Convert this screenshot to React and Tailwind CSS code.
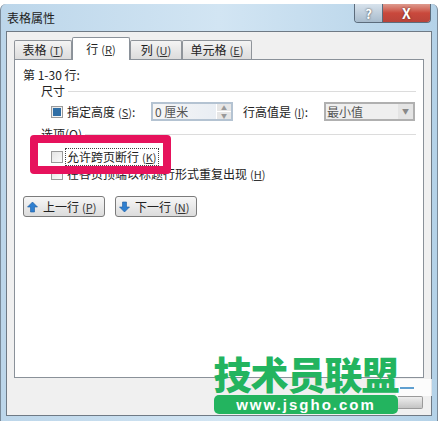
const font = { fontFamily: '"Noto Sans CJK SC", "Liberation Sans", sans-serif' };

function Key({ k }) {
  return (
    <span className="ml-[3px] text-[11px] text-[#333]">
      (<span className="underline">{k}</span>)
    </span>
  );
}

function Tab({ label, k, active, width }) {
  if (active) {
    return (
      <div className={`relative z-10 -mb-px -mt-[2px] flex h-[23px] ${width} items-center justify-center rounded-t-[2px] border border-b-0 border-[#8a9199] bg-white text-[12px] text-[#222]`}>
        {label}
        <Key k={k} />
      </div>
    );
  }
  return (
    <div className={`flex h-[19px] ${width} items-center justify-center rounded-t-[2px] border border-b-0 border-[#8f949a] bg-gradient-to-b from-[#f4f4f4] to-[#dcdcdc] text-[12px] text-[#222]`}>
      {label}
      <Key k={k} />
    </div>
  );
}

function Check({ on }) {
  return (
    <span className="flex h-[12px] w-[12px] shrink-0 items-center justify-center border border-[#9a9a9a] bg-gradient-to-br from-[#e4e4e4] to-[#fbfbfb]">
      {on && <span className="h-[8px] w-[8px] bg-[#2f6ea5]" />}
    </span>
  );
}

function Arrow({ up }) {
  return (
    <svg width="11" height="12" viewBox="0 0 11 12">
      <path
        d={up ? "M5.5 1 L10.5 6 H7.5 V11 H3.5 V6 H0.5 Z" : "M5.5 11 L10.5 6 H7.5 V1 H3.5 V6 H0.5 Z"}
        fill="#2f7fd0"
        stroke="#1d5da0"
        strokeWidth="0.6"
      />
    </svg>
  );
}

function NavButton({ up, label, k }) {
  return (
    <div className="flex h-[21px] w-[82px] items-center gap-[5px] rounded-[3px] border border-[#7b7b7b] bg-gradient-to-b from-[#f7f7f7] to-[#dcdcdc] pl-[3px] text-[12px] text-[#222]">
      <Arrow up={up} />
      <span>
        {label}
        <Key k={k} />
      </span>
    </div>
  );
}

function GroupTitle({ children }) {
  return (
    <div className="flex items-center gap-[3px] pl-[26px] text-[12px] leading-[16px] text-[#222]">
      {children}
      <span className="h-px flex-1 bg-[#dcdcdc]" />
    </div>
  );
}

export default function App() {
  return (
    <div className="relative h-[421px] w-[441px] overflow-hidden bg-white" style={font}>
      <div className="mt-[4px] flex h-[417px] w-[438px] flex-col rounded-t-[6px] border-l border-r border-[#7a8a99] bg-gradient-to-r from-[#bcd6ea] via-[#d2e5f3] to-[#b4d2e8] px-[5px] pb-[5px]">
        {/* title bar */}
        <div className="flex h-[27px] shrink-0 items-start justify-between">
          <span className="pl-[1px] pt-[5px] text-[12px] leading-[18px] text-[#222]">表格属性</span>
          <div className="mr-[1px] flex h-[19px] overflow-hidden rounded-b-[4px] border border-t-0 border-[#5c6c7c]">
            <div className="flex w-[28px] items-center justify-center border-r border-[#5c6c7c] bg-gradient-to-b from-[#d7e2ec] to-[#a9bccd] text-[13px] leading-none font-bold text-white [text-shadow:0_0_2px_#333]">
              ?
            </div>
            <div className="flex w-[47px] items-center justify-center bg-gradient-to-b from-[#dd9a8e] via-[#c9483c] to-[#b9443a] text-[14px] leading-none font-bold text-white [text-shadow:0_0_2px_#522]">
              X
            </div>
          </div>
        </div>

        {/* dialog body */}
        <div className="flex min-h-0 flex-1 flex-col border border-[#6f7a85] bg-[#f0f0f0] px-[7px]">
          <div className="flex h-[27px] shrink-0 items-end">
            <Tab label="表格" k="T" width="w-[58px]" />
            <Tab label="行" k="R" active width="w-[58px]" />
            <Tab label="列" k="U" width="w-[52px]" />
            <Tab label="单元格" k="E" width="w-[70px]" />
          </div>

          <div className="h-[319px] shrink-0 border border-[#8a9199] bg-white pt-[7px]">
            <div className="pl-[8px] text-[12px] leading-[16px] text-[#222]">第 1-30 行:</div>
            <div className="pr-[7px]">
              <GroupTitle>尺寸</GroupTitle>
            </div>

            <div className="mt-[3px] flex h-[19px] items-center pl-[36px] text-[12px] text-[#222]">
              <Check on />
              <span className="ml-[4px] w-[84px]">
                指定高度
                <Key k="S" />:
              </span>
              <div className="flex h-[19px] w-[82px] items-center justify-between border-2 border-[#b4c3d2] bg-gradient-to-r from-[#f6f6f6] to-[#e6ecf3] pl-[2px] text-[#555]">
                0 厘米
                <span className="flex h-full w-[15px] flex-col gap-px bg-white pl-[1px]">
                  <span className="flex flex-1 items-center justify-center bg-[#e6e6e6] text-[6px] leading-none text-[#999]">▲</span>
                  <span className="flex flex-1 items-center justify-center bg-[#e6e6e6] text-[6px] leading-none text-[#999]">▼</span>
                </span>
              </div>
              <span className="ml-[10px] w-[81px]">
                行高值是
                <Key k="I" />:
              </span>
              <div className="flex h-[19px] w-[91px] items-center justify-between border-2 border-[#b0b0b0] bg-[#efefef] pl-[1px] text-[#555]">
                最小值
                <span className="flex h-full w-[15px] items-center justify-center bg-[#e4e4e4] text-[7px] text-[#888]">▼</span>
              </div>
            </div>

            <div className="mt-[5px] pr-[7px]">
              <GroupTitle>选项(O)</GroupTitle>
            </div>

            <div className="mt-[5px] flex h-[20px] items-center pl-[36px] text-[12px] text-[#222]">
              <Check />
              <span className="ml-[2px] border border-dotted border-[#444] px-[1px] leading-[16px]">
                允许跨页断行
                <Key k="K" />
              </span>
            </div>
            <div className="flex h-[14px] items-center pl-[36px] text-[12px] text-[#222]">
              <Check />
              <span className="ml-[4px]">
                在各页顶端以标题行形式重复出现
                <Key k="H" />
              </span>
            </div>

            <div className="mt-[15px] flex gap-[10px] pl-[8px]">
              <NavButton up label="上一行" k="P" />
              <NavButton label="下一行" k="N" />
            </div>
          </div>
        </div>
      </div>

      {/* red callout over the first option */}
      <div className="absolute left-[30px] top-[135px] h-[39px] w-[141px] rounded-[4px] border-[8px] border-[#e6125c]" />

      {/* washed out button and haze behind the watermark */}
      <div className="absolute left-[396px] top-[379px] h-[17px] w-[36px] bg-white/80" />
      <div className="absolute left-[398px] top-[396px] h-[13px] w-[25px] rounded-r-[2px] border border-l-0 border-[#9a9a9a] bg-gradient-to-b from-[#eeeeee] to-[#c4c4c4]" />
      <div className="absolute left-[400px] top-[387px] h-[2px] w-[14px] bg-[#5f9fd0]" />

      {/* site watermark */}
      <div className="absolute left-[214px] top-[352px] flex w-[184px] flex-col items-center">
        <div className="text-[38px] leading-[42px] font-black tracking-[-1px] whitespace-nowrap text-[#23b45f]">
          技术员联盟
        </div>
        <div className="mt-[1px] h-[19px] w-[184px] rounded-[5px] bg-[#23b45f] text-center text-[15px] leading-[19px] font-bold tracking-[2px] text-white" style={{ fontFamily: '"Liberation Sans", sans-serif' }}>
          www.jsgho.com
        </div>
      </div>
    </div>
  );
}
